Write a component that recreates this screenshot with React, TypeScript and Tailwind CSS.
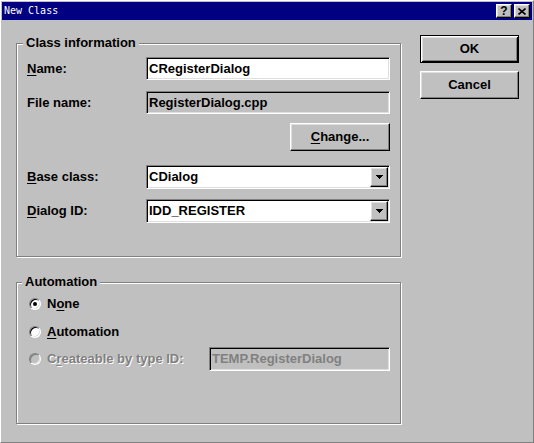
const raised =
  "border border-t-white border-l-white border-r-black border-b-black shadow-[inset_-1px_-1px_0_#808080,inset_1px_1px_0_#dfdfdf]";
const sunken =
  "border border-[#808080] border-r-white border-b-white shadow-[inset_1px_1px_0_#000,inset_-1px_-1px_0_#dfdfdf]";
const group = "relative border border-[#808080] shadow-[1px_1px_0_#fff,inset_1px_1px_0_#fff]";

function Arrow() {
  return (
    <svg width="7" height="4" viewBox="0 0 7 4" shapeRendering="crispEdges">
      <rect x="0" y="0" width="7" height="1" fill="#000" />
      <rect x="1" y="1" width="5" height="1" fill="#000" />
      <rect x="2" y="2" width="3" height="1" fill="#000" />
      <rect x="3" y="3" width="1" height="1" fill="#000" />
    </svg>
  );
}

function Combo({ value }: { value: string }) {
  return (
    <div className={`flex-1 h-[24px] flex bg-white ${sunken}`}>
      <div className="flex-1 flex items-center pl-[2px]">{value}</div>
      <div className={`w-[18px] my-[1px] mr-[1px] bg-[#c0c0c0] flex items-center justify-center ${raised}`}>
        <Arrow />
      </div>
    </div>
  );
}

function Radio({ checked, disabled }: { checked?: boolean; disabled?: boolean }) {
  return (
    <div
      className={`w-[12px] h-[12px] rounded-full border border-[#808080] border-r-white border-b-white flex items-center justify-center shrink-0 ${
        disabled
          ? "bg-[#c0c0c0] shadow-[inset_1px_1px_0_#808080,inset_-1px_-1px_0_#dfdfdf]"
          : "bg-white shadow-[inset_1px_1px_0_#000,inset_-1px_-1px_0_#dfdfdf]"
      }`}
    >
      {checked && <div className="w-[4px] h-[4px] rounded-full bg-black" />}
    </div>
  );
}

export default function App() {
  return (
    <div className="w-[534px] h-[443px] bg-[#c0c0c0] border border-white border-r-[#808080] border-b-[#808080] p-[1px] flex flex-col font-['Liberation_Sans',Arial,sans-serif] text-[13px] font-bold leading-[16px] text-black">
      {/* Title bar */}
      <div className="h-[18px] bg-[#000080] flex items-center px-[2px] shrink-0">
        <span className="text-white font-['DejaVu_Sans_Mono',monospace] font-normal text-[10px] leading-[12px]">New Class</span>
        <div className="ml-auto flex gap-[2px]">
          <div className={`w-[16px] h-[14px] bg-[#c0c0c0] flex items-center justify-center text-[12px] leading-[12px] ${raised}`}>?</div>
          <div className={`w-[16px] h-[14px] bg-[#c0c0c0] flex items-center justify-center ${raised}`}>
            <svg width="8" height="7" viewBox="0 0 8 7">
              <path d="M0.5 0.5L7.5 6.5M7.5 0.5L0.5 6.5" stroke="#000" strokeWidth="1.6" />
            </svg>
          </div>
        </div>
      </div>

      <div className="flex flex-1 items-start pl-[14px]">
        <div className="mt-[23px] w-[385px] flex flex-col">
          {/* Class information */}
          <div className={`h-[214px] pt-[13px] px-[10px] flex flex-col ${group}`}>
            <span className="absolute -top-[9px] left-[6px] px-[3px] bg-[#c0c0c0]">Class information</span>
            <div className="flex items-center h-[23px]">
              <span className="w-[119px]"><u className="underline-offset-2">N</u>ame:</span>
              <div className={`flex-1 h-full bg-white flex items-center pl-[2px] ${sunken}`}>CRegisterDialog</div>
            </div>
            <div className="flex items-center h-[23px] mt-[11px]">
              <span className="w-[119px]">File name:</span>
              <div className={`flex-1 h-full bg-[#c0c0c0] flex items-center pl-[2px] ${sunken}`}>RegisterDialog.cpp</div>
            </div>
            <div className="flex justify-end mt-[9px]">
              <button className={`w-[100px] h-[28px] bg-[#c0c0c0] flex items-center justify-center ${raised}`}>
                <span><u className="underline-offset-2">C</u>hange...</span>
              </button>
            </div>
            <div className="flex items-center mt-[14px]">
              <span className="w-[119px]"><u className="underline-offset-2">B</u>ase class:</span>
              <Combo value="CDialog" />
            </div>
            <div className="flex items-center mt-[10px]">
              <span className="w-[119px]"><u className="underline-offset-2">D</u>ialog ID:</span>
              <Combo value="IDD_REGISTER" />
            </div>
          </div>

          {/* Automation */}
          <div className={`mt-[25px] h-[142px] pt-[13px] pl-[12px] pr-[10px] flex flex-col ${group}`}>
            <span className="absolute -top-[9px] left-[5px] px-[3px] bg-[#c0c0c0]">Automation</span>
            <div className="flex items-center gap-[6px] h-[16px]">
              <Radio checked />
              <span>N<u className="underline-offset-2">o</u>ne</span>
            </div>
            <div className="flex items-center gap-[6px] h-[16px] mt-[12px]">
              <Radio />
              <span><u className="underline-offset-2">A</u>utomation</span>
            </div>
            <div className="flex items-center h-[24px] mt-[7px]">
              <Radio disabled />
              <span className="ml-[6px] text-[#808080] [text-shadow:1px_1px_0_#fff]">
                C<u className="underline-offset-2">r</u>eateable by type ID:
              </span>
              <div className={`ml-auto w-[181px] h-full bg-[#c0c0c0] flex items-center pl-[2px] text-[#808080] ${sunken}`}>
                TEMP.RegisterDialog
              </div>
            </div>
          </div>
        </div>

        {/* Buttons */}
        <div className="ml-[19px] mt-[15px] w-[99px] flex flex-col gap-[8px]">
          <button className="h-[28px] bg-[#c0c0c0] border border-black shadow-[inset_1px_1px_0_#fff,inset_-1px_-1px_0_#000,inset_2px_2px_0_#dfdfdf,inset_-2px_-2px_0_#808080] flex items-center justify-center">
            OK
          </button>
          <button className={`h-[28px] bg-[#c0c0c0] flex items-center justify-center ${raised}`}>Cancel</button>
        </div>
      </div>
    </div>
  );
}
